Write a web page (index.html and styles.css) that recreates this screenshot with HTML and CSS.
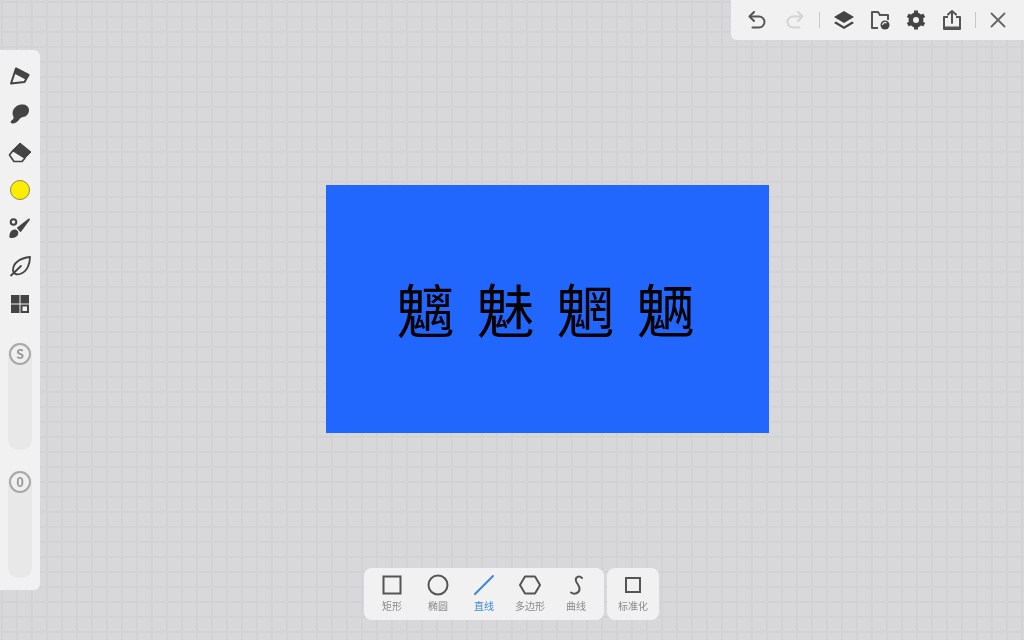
FILE: index.html
```html
<!DOCTYPE html>
<html lang="zh">
<head>
    <meta charset="utf-8">
    <title>画板</title>
    <link rel="stylesheet" href="styles.css">
</head>
<body>
    <main class="canvas">
        <div class="card">
            <span>魑</span>
            <span>魅</span>
            <span>魍</span>
            <span>魉</span>
        </div>
    </main>

    <aside class="side-panel">
        <div class="tool">
            <svg width="24" height="24" viewBox="0 0 24 24"><path d="M3 19.500 8 4.500l12.500 6.500-4 7z" fill="#f1f1f1" stroke="#444" stroke-width="2" stroke-linejoin="round"/><path d="M8 4.500l12.500 6.500-3 3.500L7 9z" fill="#444" stroke="#444" stroke-width="1.500" stroke-linejoin="round"/></svg>
        </div>
        <div class="tool">
            <svg width="24" height="24" viewBox="0 0 24 24"><path d="M11 3c5-1.500 10 .5 10 5 0 4-3 7-6 7-1 0-2 .5-3 1.500-1.500 2-4 5-7 5-2.500 0-3-2-1.500-3 1.500-1 2.500-2 2-3.500C3 10 6 4.500 11 3z" fill="#444"/></svg>
        </div>
        <div class="tool">
            <svg width="24" height="24" viewBox="0 0 24 24"><path d="M5 10l7-7 11 9-6 6z" fill="#444" stroke="#444" stroke-linejoin="round"/><path d="M1.500 15 5 10.500 17 18l-3 3.500H6z" fill="#f1f1f1" stroke="#444" stroke-width="1.700" stroke-linejoin="round"/></svg>
        </div>
        <div class="tool">
            <span class="color-dot"></span>
        </div>
        <div class="tool">
            <svg width="24" height="24" viewBox="0 0 24 24"><circle cx="5.500" cy="6" r="2.800" fill="#f1f1f1" stroke="#444" stroke-width="2"/><path d="M21 3.500 10 12l2.500 3z" fill="#444" stroke="#444" stroke-width="1.800" stroke-linejoin="round"/><path d="M1.500 21.500c-.5-4 1.500-8 5-8 3 0 4.500 2.500 3.500 5-1 3-5.500 4.500-8.500 3z" fill="#444"/></svg>
        </div>
        <div class="tool">
            <svg width="24" height="24" viewBox="0 0 24 24" fill="none" stroke="#444" stroke-width="1.800" stroke-linecap="round" stroke-linejoin="round"><path d="M22 3C12 4 5 9 5 16c0 4 4 5 7 4 7-2 10-10 10-17z"/><path d="M3 21.500 13 12"/></svg>
        </div>
        <div class="tool">
            <svg width="24" height="24" viewBox="0 0 24 24"><rect x="3" y="3" width="8.500" height="8.500" fill="#444"/><rect x="12.500" y="3" width="8.500" height="8.500" fill="#444"/><rect x="3" y="12.500" width="8.500" height="8.500" fill="#444"/><rect x="12.500" y="12.500" width="8.500" height="8.500" fill="#444"/><rect x="14.500" y="14.500" width="4.500" height="4.500" fill="#f1f1f1"/></svg>
        </div>
        <div class="slider slider-first"><span class="knob">S</span></div>
        <div class="slider"><span class="knob">0</span></div>
    </aside>

    <header class="top-panel">
        <button class="top-btn btn-undo">
            <svg width="24" height="24" viewBox="0 0 24 24" fill="none" stroke="#555" stroke-width="2" stroke-linecap="round" stroke-linejoin="round"><path d="M9 4 4.500 8.500 9 13"/><path d="M5 8.500h9a5.500 5.500 0 0 1 0 11H7.500"/></svg>
        </button>
        <button class="top-btn">
            <svg width="24" height="24" viewBox="0 0 24 24" fill="none" stroke="#d4d4d4" stroke-width="2" stroke-linecap="round" stroke-linejoin="round"><path d="M15 4l4.500 4.500L15 13"/><path d="M19 8.500h-9a5.500 5.500 0 0 0 0 11h6.500"/></svg>
        </button>
        <span class="top-sep"></span>
        <button class="top-btn">
            <svg width="24" height="24" viewBox="0 0 24 24"><path d="M12 3l10 6-10 6L2 9z" fill="#444"/><path d="M4 13.500 2 15l10 6 10-6-2-1.500-8 5z" fill="#444"/></svg>
        </button>
        <button class="top-btn">
            <svg width="24" height="24" viewBox="0 0 24 24"><path d="M10 20H4V4h6l2 3h8v5" fill="none" stroke="#555" stroke-width="2" stroke-linejoin="round"/><path d="M11 6h9v2h-9z" fill="#555"/><circle cx="17" cy="17" r="4.500" fill="#444"/><path d="M14.500 17a2.500 2.500 0 0 1 4-2" fill="none" stroke="#f1f1f1" stroke-width="1.300"/></svg>
        </button>
        <button class="top-btn">
            <svg width="24" height="24" viewBox="0 0 24 24"><path d="M12 6.500a5.500 5.500 0 1 0 0 11 5.500 5.500 0 0 0 0-11z" fill="none" stroke="#444" stroke-width="4"/><path d="M12 2.500v19M3.800 7.250l16.400 9.500M3.800 16.750l16.400-9.500" stroke="#444" stroke-width="4"/><circle cx="12" cy="12" r="3" fill="#f1f1f1"/></svg>
        </button>
        <button class="top-btn">
            <svg width="24" height="24" viewBox="0 0 24 24" fill="none" stroke="#555" stroke-width="2" stroke-linejoin="round"><path d="M8 9H4v12h16V9h-4"/><path d="M12 15V3M8 6.500 12 3l4 3.500" stroke-linecap="round"/><path d="M4 20h16" stroke-width="3"/></svg>
        </button>
        <span class="top-sep sep-wide"></span>
        <button class="top-btn">
            <svg width="24" height="24" viewBox="0 0 24 24" fill="none" stroke="#666" stroke-width="1.800" stroke-linecap="round"><path d="M5.500 5.500l13 13M18.500 5.500l-13 13"/></svg>
        </button>
    </header>

    <footer class="shape-bar">
        <div class="shape-group">
            <div class="shape">
                <svg width="24" height="24" viewBox="0 0 24 24" fill="none" stroke="#555" stroke-width="2"><rect x="3.500" y="3.500" width="17" height="17"/></svg>
                <span>矩形</span>
            </div>
            <div class="shape">
                <svg width="24" height="24" viewBox="0 0 24 24" fill="none" stroke="#555" stroke-width="2"><circle cx="12" cy="12" r="9.500"/></svg>
                <span>椭圆</span>
            </div>
            <div class="shape shape-active">
                <svg width="24" height="24" viewBox="0 0 24 24" fill="none" stroke="#3f86dc" stroke-width="2" stroke-linecap="round"><path d="M3 21 21 3"/></svg>
                <span>直线</span>
            </div>
            <div class="shape">
                <svg width="24" height="24" viewBox="0 0 24 24" fill="none" stroke="#555" stroke-width="2" stroke-linejoin="round"><path d="M7 3.500h10l5 8.500-5 8.500H7L2 12z"/></svg>
                <span>多边形</span>
            </div>
            <div class="shape">
                <svg width="24" height="24" viewBox="0 0 24 24" fill="none" stroke="#555" stroke-width="2" stroke-linecap="round"><path d="M18 5c-3-3-7-1-6 3 1 3 4 5 3.500 8.500C15 20 10.500 22 7 19.500"/></svg>
                <span>曲线</span>
            </div>
        </div>
        <div class="shape-group group-single">
            <div class="shape">
                <svg width="24" height="24" viewBox="0 0 24 24" fill="none" stroke="#555" stroke-width="2"><rect x="5" y="5" width="14" height="14"/></svg>
                <span>标准化</span>
            </div>
        </div>
    </footer>
</body>
</html>
```

FILE: styles.css
```css
body {
    margin: 0;
    padding: 0;
    font-family: "Noto Sans CJK SC", "Noto Sans", sans-serif;
    overflow: hidden;
}
svg, .shape span, .knob, .card span {
    filter: blur(0.5px);
}
.canvas {
    position: relative;
    width: 1024px;
    height: 640px;
    background-color: #d8d8da;
    background-image:
        linear-gradient(to right, #d2d2d4 1px, #d5d5d7 2px, transparent 2px),
        linear-gradient(to bottom, #d2d2d4 1px, #d5d5d7 2px, transparent 2px);
    background-size: 15px 15px;
    background-position: 1px 1px;
}
.card {
    position: absolute;
    left: 326px;
    top: 185px;
    width: 443px;
    height: 248px;
    padding: 0 4px 3px 0;
    box-sizing: border-box;
    background-color: #2166fd;
    color: #000;
    font-size: 58px;
    line-height: 1;
    display: flex;
    justify-content: center;
    align-items: center;
    gap: 22px;
}
.side-panel {
    position: absolute;
    left: 0;
    top: 50px;
    width: 40px;
    height: 540px;
    padding-top: 7px;
    box-sizing: border-box;
    background-color: #f1f1f1;
    border-radius: 0 6px 6px 0;
    display: flex;
    flex-direction: column;
    align-items: center;
}
.tool {
    width: 40px;
    height: 38px;
    flex-shrink: 0;
    display: flex;
    align-items: center;
    justify-content: center;
}
.color-dot {
    width: 18px;
    height: 18px;
    border-radius: 50%;
    background-color: #fbed06;
    border: 1px solid #8f8b3c;
}
.slider {
    width: 24px;
    height: 107px;
    margin-top: 21px;
    flex-shrink: 0;
    background-color: #e8e8e8;
    border-radius: 11px;
    display: flex;
    justify-content: center;
}
.slider-first {
    margin-top: 20px;
}
.knob {
    width: 18px;
    height: 18px;
    border: 2px solid #a8a8a8;
    border-radius: 50%;
    background-color: #efefef;
    color: #999;
    font-size: 13px;
    font-weight: 700;
    line-height: 18px;
    text-align: center;
}
.top-panel {
    position: absolute;
    left: 731px;
    top: 0;
    width: 293px;
    height: 40px;
    padding-left: 14px;
    box-sizing: border-box;
    background-color: #f1f1f1;
    border-radius: 0 0 0 6px;
    display: flex;
    align-items: center;
}
.top-btn {
    width: 24px;
    height: 24px;
    padding: 0;
    border: 0;
    margin-right: 12px;
    background: none;
    display: block;
}
.btn-undo {
    margin-right: 14px;
}
.top-sep {
    width: 1px;
    height: 16px;
    margin: 0 12px 0 0;
    background-color: #c8c8c8;
}
.sep-wide {
    margin-left: -1px;
    margin-right: 10px;
}
.shape-bar {
    position: absolute;
    left: 364px;
    top: 568px;
    display: flex;
    gap: 3px;
}
.shape-group {
    height: 52px;
    padding: 0 5px;
    background-color: #f1f1f1;
    border-radius: 8px;
    display: flex;
}
.group-single {
    padding: 0 3px;
}
.shape {
    width: 46px;
    padding-top: 5px;
    box-sizing: border-box;
    display: flex;
    flex-direction: column;
    align-items: center;
    color: #8a8a8a;
    font-size: 10px;
    line-height: 14px;
}
.shape span {
    margin-top: 2px;
}
.shape-active {
    color: #3f86dc;
}
```
